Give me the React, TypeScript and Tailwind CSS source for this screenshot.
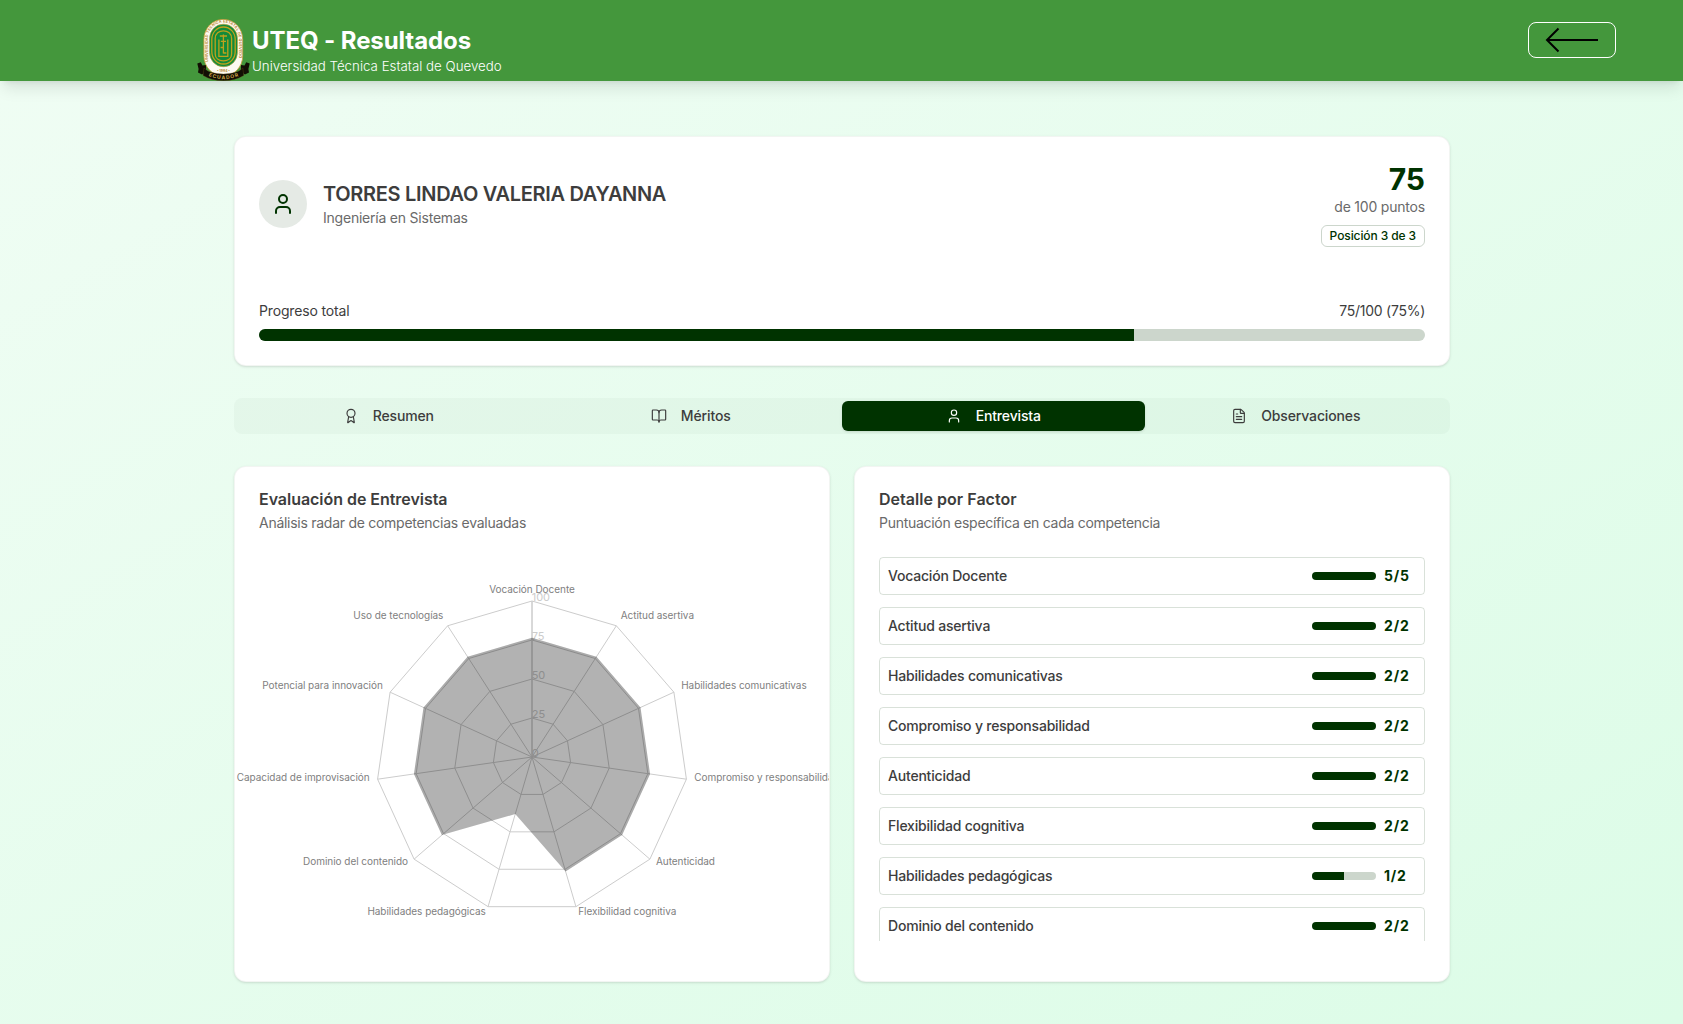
import React from "react";
import { Award, BookOpen, FileText, User } from "lucide-react";

const factors = [
  { name: "Vocación Docente", score: 5, max: 5 },
  { name: "Actitud asertiva", score: 2, max: 2 },
  { name: "Habilidades comunicativas", score: 2, max: 2 },
  { name: "Compromiso y responsabilidad", score: 2, max: 2 },
  { name: "Autenticidad", score: 2, max: 2 },
  { name: "Flexibilidad cognitiva", score: 2, max: 2 },
  { name: "Habilidades pedagógicas", score: 1, max: 2 },
  { name: "Dominio del contenido", score: 2, max: 2 },
  { name: "Capacidad de improvisación", score: 2, max: 2 },
  { name: "Potencial para innovación", score: 2, max: 2 },
  { name: "Uso de tecnologías", score: 2, max: 2 },
];

const tabs = [
  { label: "Resumen", icon: Award, active: false },
  { label: "Méritos", icon: BookOpen, active: false },
  { label: "Entrevista", icon: User, active: true },
  { label: "Observaciones", icon: FileText, active: false },
];

function Logo() {
  return (
    <svg width="54" height="62" viewBox="0 0 54 62" className="shrink-0" aria-hidden>
      <defs>
        <path id="ring" d="M10.8 43V20a15.5 16.5 0 0 1 31 0v23" />
        <path id="band" d="M9.500 56.200q17 8 34 0" />
      </defs>
      <path d="M.3 44.5 3.800 43.2 5.500 46.500 9 46v7l-4 2.500-4-2 .6-3.500Z" fill="#120f04" />
      <path d="M52.700 44.500 49.200 43.200 47.500 46.500 44 46v7l4 2.500 4-2-.6-3.500Z" fill="#120f04" />
      <rect x="6.900" y=".4" width="38.800" height="56.500" rx="19" ry="20" fill="#fdfaf2" stroke="#c99c3a" strokeWidth=".8" />
      <rect x="12.500" y="5.200" width="28" height="42.500" rx="13.500" ry="14.500" fill="#138a3a" stroke="#c9a23a" strokeWidth=".6" />
      <g fill="none" stroke="#bfa21d" strokeWidth="1.300">
        <rect x="14.800" y="8" width="23.400" height="37" rx="11.500" ry="12.500" />
        <path d="M18.200 35V19.500C18.200 14.500 22 11.800 26.400 11.800s8.200 2.700 8.200 7.700V35c0 4.500-3.700 6.800-8.200 6.800S18.200 39.500 18.200 35Z" />
        <path d="M21.900 20.500v16.800h8.900V20.500" />
        <path d="M26.400 15.500v19M22.800 17h7.200M23.800 22.300h5.200M26.400 28.500h-2.800M26.400 34h3" />
      </g>
      <text fontSize="3.700" fontWeight="700" fill="#b98a35" fontFamily="Inter, sans-serif">
        <textPath href="#ring" textLength="92">UNIVERSIDAD TECNICA ESTATAL DE QUEVEDO</textPath>
      </text>
      <text x="26.400" y="53.300" textAnchor="middle" fontSize="3.400" fontWeight="700" fill="#b98a35" fontFamily="Inter, sans-serif">• 1984 •</text>
      <path d="M7 49q3 3 7 4.200 12.400 3.600 24.800 0 4-1.200 7-4.200l1 7.500Q38 61.800 26.400 61.800T6 56.500Z" fill="#120f04" stroke="#7a5c1c" strokeWidth=".3" />
      <text fontSize="5" fontWeight="700" fill="#cfa548" fontFamily="Inter, sans-serif">
        <textPath href="#band" startOffset="50%" textAnchor="middle" textLength="31">ECUADOR</textPath>
      </text>
    </svg>
  );
}

const CX = 273;
const CY = 200;
const R = 156;

function point(i: number, r: number): [number, number] {
  const a = (i * 2 * Math.PI) / factors.length;
  return [CX + r * Math.sin(a), CY - r * Math.cos(a)];
}

function polygon(radius: (i: number) => number) {
  return factors.map((_, i) => point(i, radius(i)).map((v) => v.toFixed(2)).join(",")).join(" ");
}

function RadarChart() {
  const dip = 6;
  const edge = factors
    .map((_, k) => (dip + 1 + k) % factors.length)
    .filter((i) => i !== dip)
    .map((i) => point(i, 118.2).map((v) => v.toFixed(2)).join(","))
    .join(" ");
  return (
    <svg width="546" height="400" viewBox="0 0 546 400" className="block overflow-visible font-[Inter,sans-serif] text-[10px]">
      <g fill="none" stroke="#cccccc">
        {factors.map((f, i) => {
          const [x, y] = point(i, R);
          return <line key={f.name} x1={CX} y1={CY} x2={x} y2={y} />;
        })}
        {[39, 78, 117, 156].map((r) => (
          <polygon key={r} points={polygon(() => r)} />
        ))}
        <line x1={CX} y1={CY} x2={CX} y2={CY - R} />
      </g>
      <g fill="#808080" className="tracking-[-0.04px]">
        {factors.map((f, i) => {
          const [x, y] = point(i, R + 8);
          const anchor = i === 0 ? "middle" : i <= 5 ? "start" : "end";
          return (
            <text key={f.name} x={x} y={y + 0.2} textAnchor={anchor}>
              {f.name}
            </text>
          );
        })}
      </g>
      <g fill="#cccccc" className="text-[11px]">
        {[0, 25, 50, 75, 100].map((t) => (
          <text key={t} x={CX - 0.3} y={CY - (R * t) / 100}>
            {t}
          </text>
        ))}
      </g>
      <polygon points={polygon((i) => (i === dip ? 59.5 : 119.3))} fill="#000000" fillOpacity="0.3" />
      <polyline points={edge} fill="none" stroke="#000000" strokeOpacity="0.04" strokeWidth="1.8" />
    </svg>
  );
}

function Progress({ value, className }: { value: number; className: string }) {
  return (
    <div className={"overflow-hidden rounded-full bg-[#ccd6cc] " + className}>
      <div className="h-full bg-[#003300]" style={{ width: `${value}%` }} />
    </div>
  );
}

const card = "rounded-xl border border-[#003300]/5 bg-white shadow-sm";

export default function App() {
  return (
    <div className="h-[1024px] overflow-hidden bg-linear-to-br from-[#f0fdf4] to-[#dcfce7] font-[Inter,sans-serif] text-[#3d3d3d]">
      <header className="flex h-[81px] items-start justify-between bg-[#44973c] pl-[197px] pr-[67px] shadow-lg">
        <div className="flex">
          <div className="pt-[19px]">
            <Logo />
          </div>
          <div className="pl-px pt-[25px] text-white">
            <h1 className="text-2xl leading-[31px] font-bold tracking-[-0.09px]">UTEQ - Resultados</h1>
            <p className="text-[13.3px] leading-5 font-light tracking-[0.01px]">Universidad Técnica Estatal de Quevedo</p>
          </div>
        </div>
        <button className="mt-[22px] flex h-9 w-[88px] items-center justify-center rounded-lg border border-white" aria-label="Volver">
          <svg width="54" height="26" viewBox="0 0 54 26" fill="none" stroke="#000" strokeWidth="2">
            <path d="M53 13H2M13.500 1.500 2 13l11.500 11.500" />
          </svg>
        </button>
      </header>

      <main className="mt-[55px] ml-[234px] flex w-[1216px] flex-col gap-8">
        <section className={card + " h-[230px] p-6"}>
          <div className="flex items-center justify-between">
            <div className="flex items-center gap-4">
              <div className="flex size-12 items-center justify-center rounded-full bg-[#e5eae5] text-[#003300]">
                <User size={24} />
              </div>
              <div>
                <h2 className="text-xl font-semibold tracking-[-0.31px]">TORRES LINDAO VALERIA DAYANNA</h2>
                <p className="text-sm tracking-[-0.22px] text-[#6a6a6a]">Ingeniería en Sistemas</p>
              </div>
            </div>
            <div className="flex flex-col items-end">
              <div className="text-3xl font-bold text-[#003300]">75</div>
              <div className="text-sm tracking-[-0.2px] text-[#6a6a6a]">de 100 puntos</div>
              <div className="mt-2 rounded-md border border-[#003300]/20 px-2 py-0.5 text-xs font-medium tracking-[-0.1px] text-[#003300]">
                Posición 3 de 3
              </div>
            </div>
          </div>
          <div className="mt-[54px] flex justify-between text-sm">
            <span className="tracking-[-0.15px]">Progreso total</span>
            <span className="tracking-[-0.26px]">75/100 (75%)</span>
          </div>
          <Progress value={75} className="mt-2 h-3" />
        </section>

        <nav className="grid h-9 grid-cols-4 rounded-lg bg-[#003300]/[0.028] p-[3px]">
          {tabs.map(({ label, icon: Icon, active }) => (
            <button
              key={label}
              className={
                "flex items-center justify-center gap-3.5 rounded-md text-sm font-[450] tracking-[-0.14px] " +
                (active ? "bg-[#003300] text-white shadow-sm" : "")
              }
            >
              <Icon size={16} strokeWidth={1.75} />
              {label}
            </button>
          ))}
        </nav>

        <div className="grid grid-cols-2 gap-6">
          <section className={card + " h-[516px] overflow-hidden p-6"}>
            <h3 className="text-base leading-none font-semibold tracking-[-0.04px]">Evaluación de Entrevista</h3>
            <p className="mt-1.5 mb-6 text-sm tracking-[-0.27px] text-[#6a6a6a]">Análisis radar de competencias evaluadas</p>
            <RadarChart />
          </section>
          <section className={card + " h-[516px] p-6"}>
            <h3 className="text-base leading-none font-semibold tracking-[0.03px]">Detalle por Factor</h3>
            <p className="mt-1.5 mb-6 text-sm tracking-[-0.28px] text-[#6a6a6a]">Puntuación específica en cada competencia</p>
            <div className="flex h-96 flex-col gap-3 overflow-hidden">
              {factors.map((f) => (
                <div key={f.name} className="flex h-[38px] shrink-0 items-center justify-between rounded border border-[#003300]/15 px-2">
                  <span className="text-sm font-[450] tracking-[-0.2px]">{f.name}</span>
                  <div className="flex items-center gap-2">
                    <Progress value={(f.score / f.max) * 100} className="h-2 w-16" />
                    <span className="w-8 text-sm font-bold tracking-[0.8px] text-[#003300]">
                      {f.score}/{f.max}
                    </span>
                  </div>
                </div>
              ))}
            </div>
          </section>
        </div>
      </main>
    </div>
  );
}
